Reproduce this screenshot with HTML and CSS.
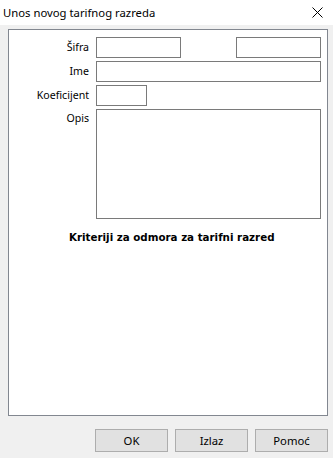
FILE: index.html
```html
<!DOCTYPE html>
<html lang="hr">
<head>
    <meta charset="UTF-8">
    <meta name="viewport" content="width=device-width, initial-scale=1.0">
    <title>Unos novog tarifnog razreda</title>
    <link rel="stylesheet" href="styles.css">
</head>
<body>
    <!-- Naslovna traka prozora -->
    <div class="titlebar">
        <span class="title">Unos novog tarifnog razreda</span>
        <svg class="close" width="11" height="11" viewBox="0 0 11 11">
            <path d="M0.5 0.5 L10.5 10.5 M10.5 0.5 L0.5 10.5" stroke="#000" stroke-width="1" fill="none"/>
        </svg>
    </div>

    <!-- Okvir forme -->
    <div class="panel">
        <div class="form-grid">
            <label class="lbl">Šifra</label>
            <div class="row-sifra">
                <input type="text" class="inp inp-sifra">
                <input type="text" class="inp inp-sifra">
            </div>

            <label class="lbl">Ime</label>
            <input type="text" class="inp">

            <label class="lbl">Koeficijent</label>
            <div><input type="text" class="inp inp-koef"></div>

            <label class="lbl lbl-top">Opis</label>
            <textarea class="inp inp-opis"></textarea>
        </div>

        <p class="kriteriji">Kriteriji za odmora za tarifni razred</p>
    </div>

    <!-- Dugmad -->
    <div class="buttons">
        <button type="button" class="btn">OK</button>
        <button type="button" class="btn">Izlaz</button>
        <button type="button" class="btn">Pomoć</button>
    </div>
</body>
</html>
```

FILE: styles.css
```css
body {
    margin: 0;
    padding: 0;
    background-color: #f0f0f0;
    font-family: "Noto Sans", Arial, sans-serif;
    font-size: 12px;
    color: #000;
    width: 333px;
    height: 458px;
    overflow: hidden;
}
.titlebar {
    height: 25px;
    background: #fff;
    display: flex;
    align-items: center;
    justify-content: space-between;
    padding: 0 10px 0 3px;
}
.title {
    font-size: 11.3px;
}
.close {
    display: block;
}
.panel {
    margin: 4px 5px 0 8px;
    height: 378px;
    background: #fff;
    border: 1px solid #828790;
    padding: 7px 6px 0 0;
}
.form-grid {
    display: grid;
    grid-template-columns: 80px 1fr;
    column-gap: 7px;
    row-gap: 3px;
}
.lbl {
    text-align: right;
    line-height: 21px;
    font-size: 10.6px;
}
.lbl-top {
    line-height: 18px;
}
.row-sifra {
    display: flex;
    justify-content: space-between;
}
.inp {
    box-sizing: border-box;
    height: 21px;
    border: 1px solid #7a7a7a;
    background: #fff;
    margin: 0;
    padding: 0 2px;
    font: inherit;
    outline: none;
    border-radius: 0;
}
.inp-sifra {
    width: 85px;
}
.inp-koef {
    width: 51px;
}
.inp-opis {
    height: 110px;
    resize: none;
}
.kriteriji {
    margin: 12px 0 0 60px;
    font-family: "DejaVu Sans", Verdana, sans-serif;
    font-weight: bold;
    font-size: 10.3px;
}
.buttons {
    display: flex;
    justify-content: flex-end;
    gap: 7px;
    margin: 13px 5px 0 0;
}
.btn {
    box-sizing: border-box;
    width: 73px;
    height: 23px;
    background: #e1e1e1;
    border: 1px solid #adadad;
    font-family: "Noto Sans", Arial, sans-serif;
    font-size: 11.3px;
    color: #000;
    padding: 0;
}
```
